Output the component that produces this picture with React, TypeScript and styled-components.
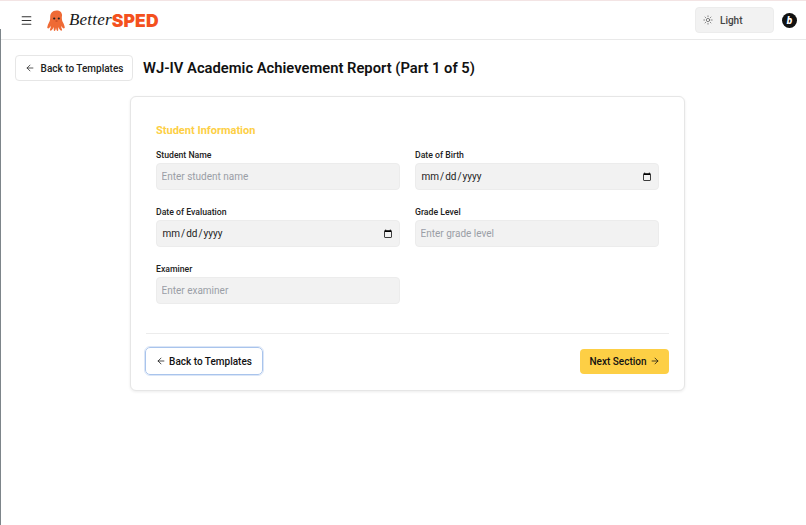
import { createGlobalStyle, styled } from 'styled-components';
import { ArrowLeft, ArrowRight, Menu, Sun } from 'lucide-react';

const GlobalStyle = createGlobalStyle`
  html, body {
    margin: 0;
    height: 100%;
    background: #fff;
    font-family: Roboto, "Liberation Sans", sans-serif;
    color: #111;
  }
`;

const Page = styled.div`
  position: relative;
  min-height: 525px;
  box-sizing: border-box;
  border-top: 1px solid #f3e4e4;
  overflow: hidden;

  /* window edge showing down the left side */
  &::before {
    content: '';
    position: absolute;
    left: 0;
    top: 28px;
    bottom: 0;
    width: 1px;
    background: #7d858a;
  }
`;

const Header = styled.header`
  height: 39px;
  box-sizing: border-box;
  border-bottom: 1px solid #e9e9e9;
  display: flex;
  align-items: center;
  padding: 0 9px 0 20px;
`;

const MenuButton = styled.span`
  display: flex;
  width: 13px;
  margin-right: 14px;
  color: #333;
`;

const Logo = styled.div`
  display: flex;
  align-items: center;
`;

const Better = styled.span`
  font-family: "Liberation Serif", serif;
  font-style: italic;
  font-size: 17px;
  letter-spacing: 0.2px;
  margin-left: 3px;
  color: #1a1a1a;
`;

const Sped = styled.span`
  font-family: Inter, sans-serif;
  font-weight: 900;
  font-size: 17.5px;
  letter-spacing: 0.1px;
  color: #f4511e;
`;

const Spacer = styled.div`
  flex: 1;
`;

const ThemeToggle = styled.div`
  width: 79px;
  height: 26px;
  box-sizing: border-box;
  display: flex;
  align-items: center;
  gap: 7px;
  padding-left: 7px;
  background: #f2f2f2;
  border: 1px solid #ececec;
  border-radius: 4px;
  font-size: 10px;
  font-weight: 500;
  color: #444;
  margin-right: 8px;
`;

const Badge = styled.div`
  width: 15px;
  height: 15px;
  border-radius: 50%;
  background: #111;
  color: #fff;
  font-size: 10px;
  font-weight: 900;
  font-style: italic;
  display: flex;
  align-items: center;
  justify-content: center;
`;

const TitleRow = styled.div`
  display: flex;
  align-items: center;
  gap: 10px;
  padding: 15px 15px 0;
`;

const TopBack = styled.button`
  width: 118px;
  height: 26px;
  box-sizing: border-box;
  display: flex;
  align-items: center;
  justify-content: center;
  gap: 6px;
  background: #fff;
  border: 1px solid #e6e6e6;
  border-radius: 4px;
  font: 500 10px Roboto, sans-serif;
  color: #222;
  padding: 0;
`;

const Title = styled.h1`
  margin: 0;
  font-size: 14.75px;
  font-weight: 600;
  color: #111;
`;

const Card = styled.main`
  width: 555px;
  height: 295px;
  box-sizing: border-box;
  margin: 15px 0 0 130px;
  padding: 26px 15px 0;
  background: #fff;
  border: 1px solid #e6e6e6;
  border-radius: 6px;
  box-shadow: 0 1px 3px rgba(0, 0, 0, 0.08);
`;

const Section = styled.section`
  padding: 0 10px;
`;

const SectionTitle = styled.h2`
  margin: 0 0 10px;
  font-size: 11px;
  line-height: 16px;
  font-weight: 700;
  color: #fdcf45;
`;

const FieldGrid = styled.div`
  display: grid;
  grid-template-columns: 244px 244px;
  column-gap: 15px;
  row-gap: 16px;
`;

const Field = styled.label`
  display: flex;
  flex-direction: column;
  gap: 2px;
  font-size: 8.7px;
  line-height: 12px;
  font-weight: 500;
  color: #222;
`;

const Input = styled.input`
  height: 27px;
  box-sizing: border-box;
  border: 1px solid #ececec;
  border-radius: 4px;
  background: #f2f2f2;
  padding: 0 4.5px;
  font: 400 10px Roboto, sans-serif;
  color: #222;
  outline: none;
  &::placeholder {
    color: #9a9ea6;
  }
`;

const Divider = styled.hr`
  border: 0;
  border-top: 1px solid #ececec;
  margin: 29px 0 13px;
`;

const Footer = styled.div`
  display: flex;
  align-items: center;
  justify-content: space-between;
`;

const BackButton = styled.button`
  width: 118px;
  height: 28px;
  margin-left: -1px;
  box-sizing: border-box;
  display: flex;
  align-items: center;
  justify-content: center;
  gap: 3px;
  background: #fff;
  border: 1px solid #a9c4ec;
  outline: 1px solid #dbe6f7;
  border-radius: 5px;
  font: 500 10px Roboto, sans-serif;
  color: #111;
  padding: 0;
`;

const NextButton = styled.button`
  width: 89px;
  height: 25px;
  box-sizing: border-box;
  display: flex;
  align-items: center;
  justify-content: center;
  gap: 3px;
  background: #fdcf45;
  border: 0;
  border-radius: 4px;
  font: 500 10px Roboto, sans-serif;
  color: #111;
  padding: 0;
`;

const Octopus = () => (
  <svg width="19" height="21" viewBox="0 0 19 21">
    <path
      fill="#ef6a35"
      d="M9.500 .5C5.200 .5 3.200 3.500 3.200 7c0 2.200-.2 3.800-1.200 5.400C1.200 13.800.6 15.400.2 17.500c-.1.700.7 1.300 1.500.8 1-.6 1.700-1.600 2.300-2.600-.2 1.500-.5 2.800-1 3.900-.3.800.6 1.300 1.300.9 1.100-.7 1.800-2.100 2.300-3.400.1 1.300.2 2.400.2 3.200 0 .7 1 .9 1.400.3.400-.7.700-1.900.8-3.200.1 1.300.4 2.500.8 3.200.4.600 1.400.4 1.400-.3 0-.8.100-1.900.2-3.200.5 1.300 1.200 2.700 2.300 3.400.7.400 1.600-.1 1.300-.9-.5-1.100-.8-2.400-1-3.900.6 1 1.300 2 2.300 2.600.8.500 1.600-.1 1.500-.8-.4-2.100-1-3.700-1.800-5.100-1-1.600-1.200-3.200-1.200-5.400C15.800 3.500 13.800.5 9.500.5z"
    />
    <circle cx="7.200" cy="8.500" r="1.100" fill="#222" />
    <circle cx="11.800" cy="8.500" r="1.100" fill="#222" />
    <path d="M8.500 11h2" stroke="#a8381a" strokeWidth="0.8" />
  </svg>
);

const App = () => (
  <Page>
    <GlobalStyle />
    <Header>
      <MenuButton>
        <Menu size={13} strokeWidth={2} />
      </MenuButton>
      <Logo>
        <Octopus />
        <Better>Better</Better>
        <Sped>SPED</Sped>
      </Logo>
      <Spacer />
      <ThemeToggle>
        <Sun size={10} strokeWidth={1.5} />
        Light
      </ThemeToggle>
      <Badge>b</Badge>
    </Header>
    <TitleRow>
      <TopBack>
        <ArrowLeft size={10} strokeWidth={1.8} />
        Back to Templates
      </TopBack>
      <Title>WJ-IV Academic Achievement Report (Part 1 of 5)</Title>
    </TitleRow>
    <Card>
      <Section>
        <SectionTitle>Student Information</SectionTitle>
        <FieldGrid>
          <Field>
            Student Name
            <Input placeholder="Enter student name" />
          </Field>
          <Field>
            Date of Birth
            <Input type="date" />
          </Field>
          <Field>
            Date of Evaluation
            <Input type="date" />
          </Field>
          <Field>
            Grade Level
            <Input placeholder="Enter grade level" />
          </Field>
          <Field>
            Examiner
            <Input placeholder="Enter examiner" />
          </Field>
        </FieldGrid>
      </Section>
      <Divider />
      <Footer>
        <BackButton>
          <ArrowLeft size={10} strokeWidth={1.8} />
          Back to Templates
        </BackButton>
        <NextButton>
          Next Section
          <ArrowRight size={10} strokeWidth={1.8} />
        </NextButton>
      </Footer>
    </Card>
  </Page>
);

export default App;
